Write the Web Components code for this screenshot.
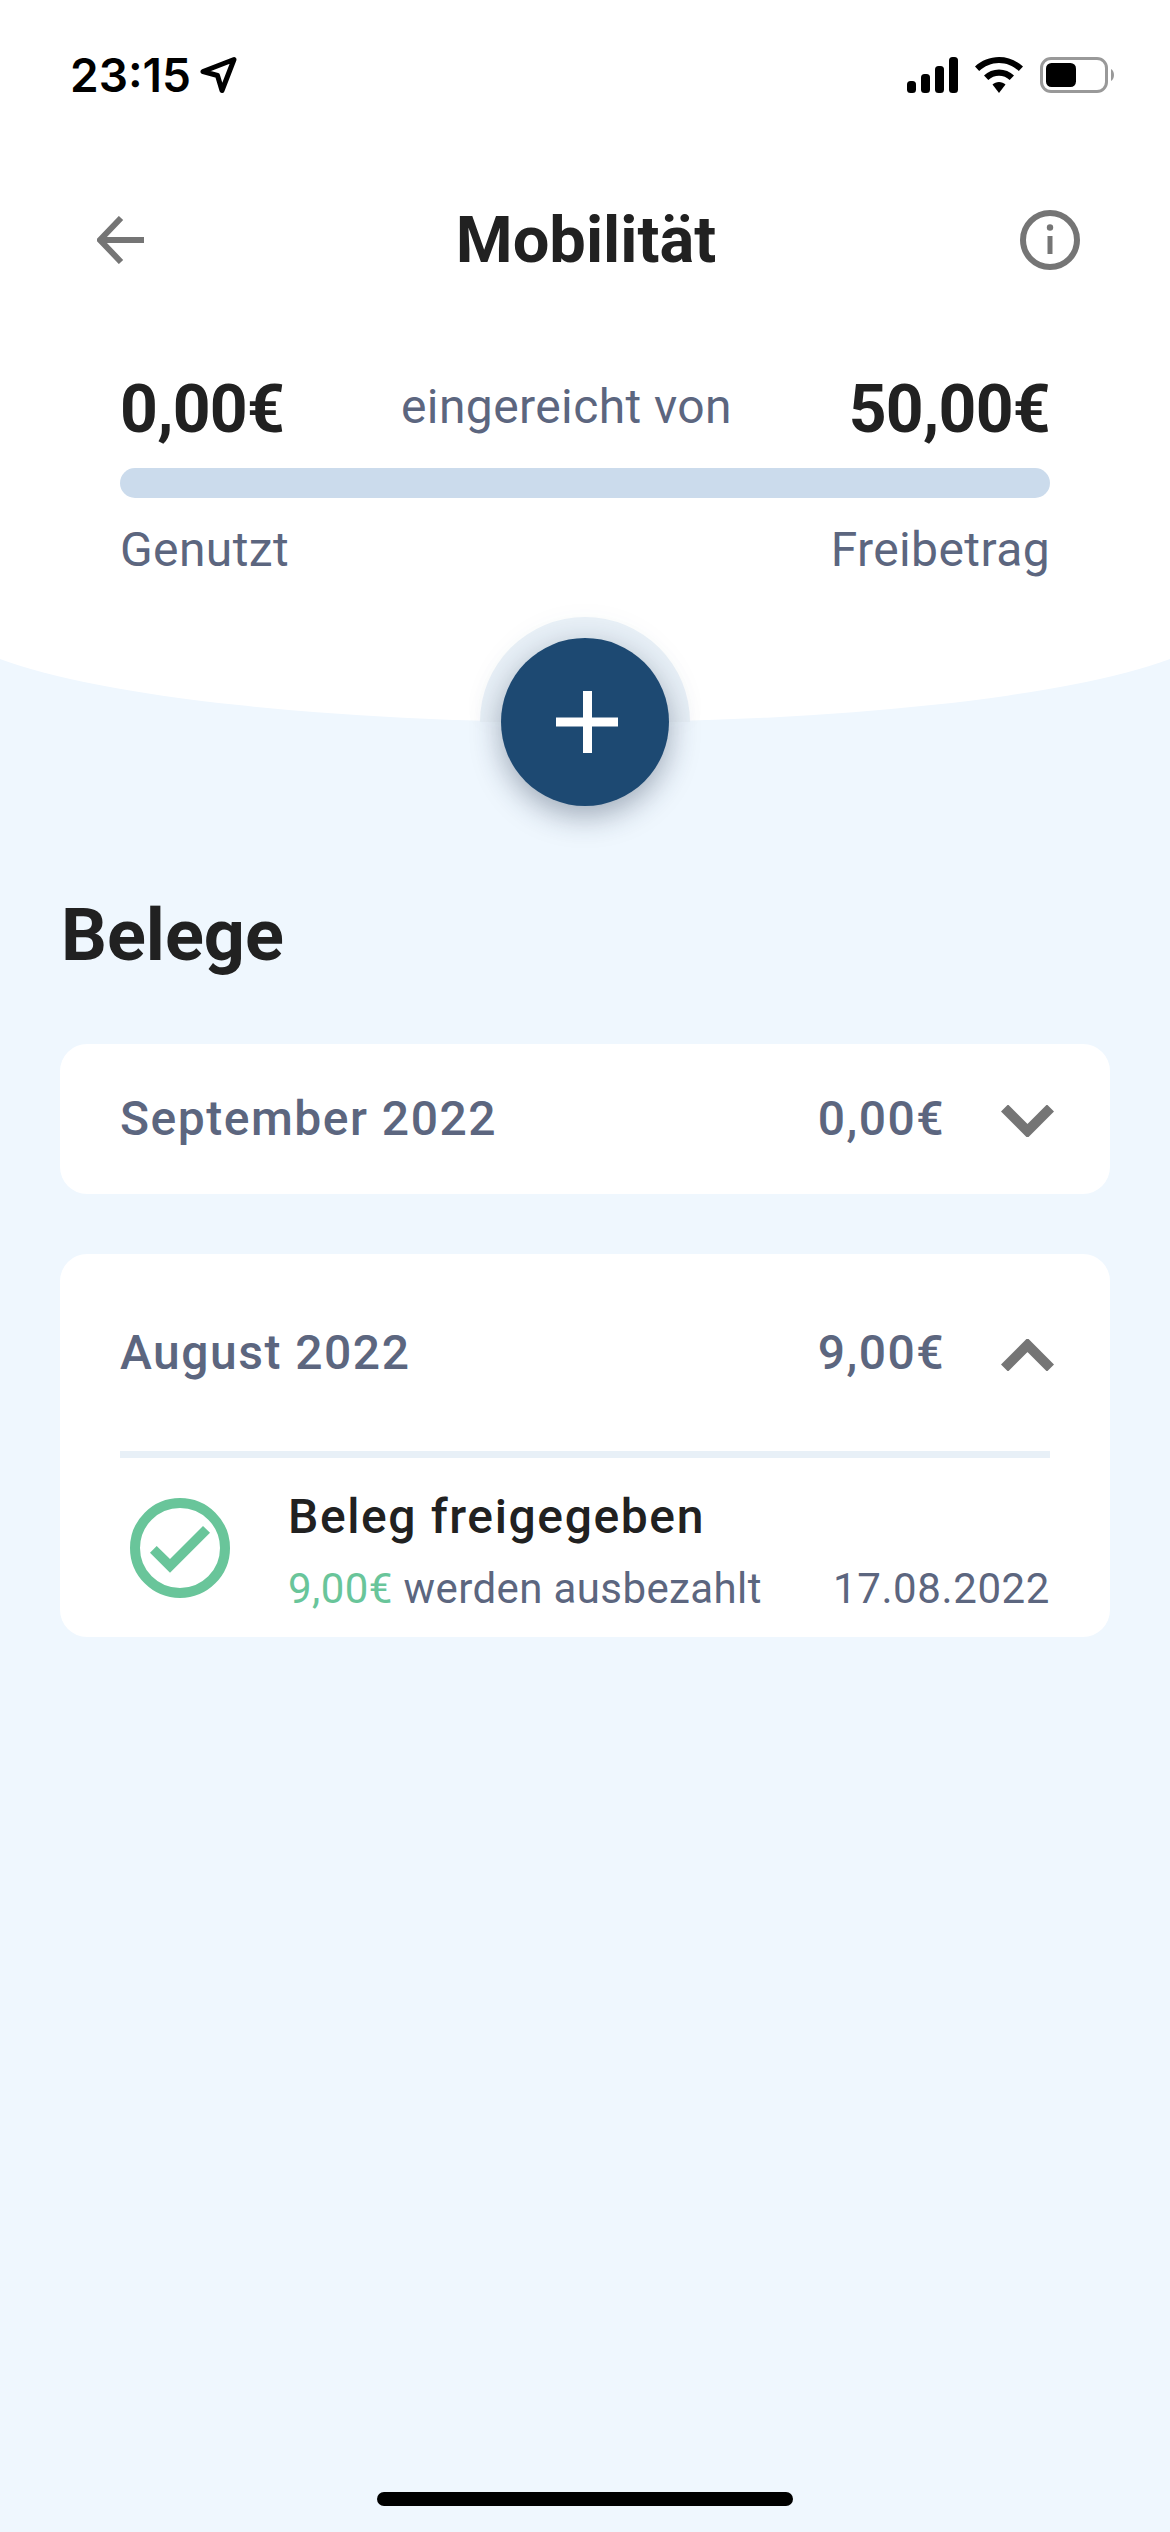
<!DOCTYPE html>
<html lang="de">
<head>
<meta charset="utf-8">
<title>Mobilität</title>
<style>
  html, body { margin: 0; padding: 0; }
  body {
    width: 1170px;
    height: 2532px;
    overflow: hidden;
    display: flex;
    flex-direction: column;
    background: #eff7fe;
    font-family: Roboto, "Liberation Sans", sans-serif;
  }
</style>
</head>
<body>
  <app-header>
    <status-bar time="23:15"></status-bar>
    <nav-bar heading="Mobilität"></nav-bar>
    <budget-summary used="0,00€" limit="50,00€"></budget-summary>
    <add-button></add-button>
  </app-header>

  <section-title>Belege</section-title>

  <month-card month="September 2022" amount="0,00€"></month-card>
  <month-card month="August 2022" amount="9,00€" open>
    <receipt-row title="Beleg freigegeben" amount="9,00€" note="werden ausbezahlt" date="17.08.2022"></receipt-row>
  </month-card>

  <home-indicator></home-indicator>

<script>
/**
 * Attaches an open shadow root with the given markup.
 */
function mount(el, html) {
  el.attachShadow({ mode: "open" }).innerHTML = html;
}

// White top area with the curved lower edge
class AppHeader extends HTMLElement {
  constructor() {
    super();
    mount(this, `
      <style>
        :host { display: block; position: relative; height: 722px; }
        .curve { position: absolute; left: 0; top: 0; z-index: 0; }
        .content { position: relative; z-index: 1; display: flex; flex-direction: column; }
      </style>
      <svg class="curve" width="1170" height="722" viewBox="0 0 1170 722">
        <path d="M0 0H1170V659A640 106 0 0 1 0 659Z" fill="#fff"/>
      </svg>
      <div class="content"><slot></slot></div>
    `);
  }
}

class StatusBar extends HTMLElement {
  constructor() {
    super();
    mount(this, `
      <style>
        :host { display: flex; align-items: center; justify-content: space-between; height: 48px; padding: 51px 56px 0 70px; color: #000; }
        .left, .right { display: flex; align-items: center; }
        .time { font: 600 46px/48px Inter, "Liberation Sans", sans-serif; }
        .arrow { margin-left: 8px; }
        .wifi { margin-left: 17px; }
        .battery { margin-left: 17px; }
        svg { display: block; }
      </style>
      <div class="left">
        <span class="time">${this.getAttribute("time")}</span>
        <svg class="arrow" width="38" height="38" viewBox="0 0 38 38"><path d="M4 15.500 35 3.500 23 34.500 18.500 19.500Z" fill="none" stroke="#000" stroke-width="5" stroke-linejoin="round"/></svg>
      </div>
      <div class="right">
        <svg width="51" height="36" viewBox="0 0 51 36" fill="#000">
          <rect x="0" y="24" width="9" height="12" rx="3.500"/>
          <rect x="14" y="17" width="9" height="19" rx="3.500"/>
          <rect x="28" y="9" width="9" height="27" rx="3.500"/>
          <rect x="42" y="0" width="9" height="36" rx="3.500"/>
        </svg>
        <svg class="wifi" width="48" height="36" viewBox="0 0 48 36" fill="#000">
          <path d="M24 0C33 0 41.500 3.500 48 9.500L43.800 14C38.500 9 31.500 6 24 6S9.500 9 4.200 14L0 9.500C6.500 3.500 15 0 24 0Z"/>
          <path d="M24 12.500C29.700 12.500 35 14.700 39 18.400L34.700 22.900C31.800 20.300 28 18.700 24 18.700S16.200 20.300 13.300 22.900L9 18.400C13 14.700 18.300 12.500 24 12.500Z"/>
          <path d="M24 25C26.500 25 28.800 26 30.500 27.500L24 36 17.500 27.500C19.200 26 21.500 25 24 25Z"/>
        </svg>
        <svg class="battery" width="74" height="36" viewBox="0 0 74 36">
          <rect x="1.500" y="1.500" width="65" height="33" rx="9.500" fill="none" stroke="#999" stroke-width="3"/>
          <rect x="6" y="6" width="30" height="24" rx="5.500" fill="#000"/>
          <path d="M71 12C73 13 74 15.500 74 18S73 23 71 24Z" fill="#999"/>
        </svg>
      </div>
    `);
  }
}

class NavBar extends HTMLElement {
  constructor() {
    super();
    mount(this, `
      <style>
        :host { display: flex; align-items: center; justify-content: space-between; height: 76px; padding: 103px 90px 0 97px; }
        h1 { margin: 0 0 0 8px; font: 700 65px/76px Roboto, sans-serif; color: #212121; }
        svg { display: block; }
      </style>
      <svg width="47" height="48" viewBox="0 0 47 48" fill="none" stroke="#757575" stroke-width="6">
        <path d="M47 24H5M24 2 3 24 24 46"/>
      </svg>
      <h1>${this.getAttribute("heading")}</h1>
      <svg width="60" height="60" viewBox="0 0 60 60" fill="none" stroke="#757575" stroke-width="6">
        <circle cx="30" cy="30" r="27"/>
        <path d="M30 26V44" stroke-width="5"/>
        <circle cx="30" cy="17.500" r="3.200" fill="#757575" stroke="none"/>
      </svg>
    `);
  }
}

class BudgetSummary extends HTMLElement {
  constructor() {
    super();
    mount(this, `
      <style>
        :host { display: block; padding: 92px 120px 0; color: #5c667f; }
        .row { display: flex; align-items: flex-start; justify-content: space-between; }
        .big { font: 700 66px/80px Roboto, sans-serif; color: #212121; letter-spacing: -.7px; }
        .mid { font: 400 48px/74px Roboto, sans-serif; letter-spacing: .4px; }
        .bar { height: 30px; margin-top: 18px; border-radius: 15px; background: #cbdbec; }
        .labels { margin-top: 20px; font: 400 48px/64px Roboto, sans-serif; letter-spacing: .4px; }
      </style>
      <div class="row">
        <span class="big">${this.getAttribute("used")}</span>
        <span class="mid">eingereicht von</span>
        <span class="big">${this.getAttribute("limit")}</span>
      </div>
      <div class="bar"></div>
      <div class="row labels"><span>Genutzt</span><span>Freibetrag</span></div>
    `);
  }
}

// Round add button that sits on the edge of the curve
class AddButton extends HTMLElement {
  constructor() {
    super();
    mount(this, `
      <style>
        :host { display: block; position: absolute; left: 480px; top: 617px; width: 210px; height: 210px; z-index: 2; }
        .halo { position: absolute; left: 0; top: 0; width: 210px; height: 105px; border-radius: 105px 105px 0 0; background: #e8f0f7; box-shadow: 0 0 24px rgba(60, 90, 130, .03); }
        .btn { position: absolute; left: 21px; top: 21px; width: 168px; height: 168px; border-radius: 50%; background: #1d4972; box-shadow: 0 10px 30px rgba(30, 45, 70, .38); display: flex; align-items: center; justify-content: center; }
        svg { display: block; margin-left: 3px; }
      </style>
      <div class="halo"></div>
      <div class="btn">
        <svg width="62" height="62" viewBox="0 0 62 62" fill="#fff"><rect x="27" y="0" width="9" height="62"/><rect x="0" y="26.500" width="62" height="9"/></svg>
      </div>
    `);
  }
}

class SectionTitle extends HTMLElement {
  constructor() {
    super();
    mount(this, `
      <style>
        :host { display: block; margin: 174px 60px 68px 61px; font: 700 72px/80px Roboto, sans-serif; color: #212121; }
      </style>
      <slot></slot>
    `);
  }
}

class MonthCard extends HTMLElement {
  constructor() {
    super();
    const chevron = this.hasAttribute("open") ? "M3.500 29 26.500 6 49.500 29" : "M3.500 3 26.500 26 49.500 3";
    mount(this, `
      <style>
        :host { display: block; margin: 0 60px 60px; background: #fff; border-radius: 27px; }
        .head { display: flex; align-items: center; height: 150px; padding: 0 56px 0 60px; color: #5c667f; }
        :host([open]) .head { height: 197px; }
        .month { flex: 1; font: 500 48px/60px Roboto, sans-serif; letter-spacing: 1.500px; }
        .amount { font: 500 48px/60px Roboto, sans-serif; letter-spacing: 1.500px; margin-right: 56px; }
        svg { display: block; margin-top: 4px; }
      </style>
      <div class="head">
        <span class="month">${this.getAttribute("month")}</span>
        <span class="amount">${this.getAttribute("amount")}</span>
        <svg width="53" height="32" viewBox="0 0 53 32" fill="none" stroke="#757575" stroke-width="10"><path d="${chevron}"/></svg>
      </div>
      <slot></slot>
    `);
  }
}

class ReceiptRow extends HTMLElement {
  constructor() {
    super();
    mount(this, `
      <style>
        :host { display: flex; margin: 0 60px; height: 179px; border-top: 7px solid #e8f0f7; color: #5c667f; }
        svg { display: block; margin: 40px 0 0 10px; flex: none; }
        .text { flex: 1; margin-left: 58px; padding-top: 29px; }
        .title { font: 500 48px/60px Roboto, sans-serif; color: #212121; letter-spacing: 1.600px; }
        .sub { display: flex; justify-content: space-between; margin-top: 14px; font: 400 42px/56px Roboto, sans-serif; }
        .note { letter-spacing: .4px; }
        .date { letter-spacing: .6px; }
        .green { color: #69c59a; }
      </style>
      <svg width="100" height="100" viewBox="0 0 100 100" fill="#69c59a">
        <circle cx="50" cy="50" r="45" fill="none" stroke="#69c59a" stroke-width="10"/>
        <path d="M26.700 48 20 54.700 40 74.700 80 34.700 73 28 40 61Z"/>
      </svg>
      <div class="text">
        <div class="title">${this.getAttribute("title")}</div>
        <div class="sub">
          <span class="note"><span class="green">${this.getAttribute("amount")}</span> ${this.getAttribute("note")}</span>
          <span class="date">${this.getAttribute("date")}</span>
        </div>
      </div>
    `);
  }
}

class HomeIndicator extends HTMLElement {
  constructor() {
    super();
    mount(this, `
      <style>
        :host { display: block; width: 416px; height: 14px; margin: auto auto 26px; border-radius: 7px; background: #000; }
      </style>
    `);
  }
}

customElements.define("app-header", AppHeader);
customElements.define("status-bar", StatusBar);
customElements.define("nav-bar", NavBar);
customElements.define("budget-summary", BudgetSummary);
customElements.define("add-button", AddButton);
customElements.define("section-title", SectionTitle);
customElements.define("month-card", MonthCard);
customElements.define("receipt-row", ReceiptRow);
customElements.define("home-indicator", HomeIndicator);
</script>
</body>
</html>
